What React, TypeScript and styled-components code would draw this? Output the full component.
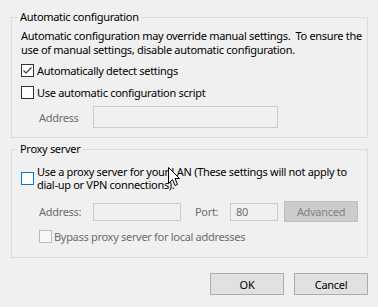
import React from "react";
import styled, { createGlobalStyle } from "styled-components";

const Global = createGlobalStyle`
  html, body { margin: 0; padding: 0; background: #f0f0f0; }
  body {
    font-family: "Noto Sans", "Open Sans", sans-serif;
    font-size: 11px;
    letter-spacing: -0.3px;
    color: #000;
  }
  * { box-sizing: border-box; }
`;

const Dialog = styled.div`
  position: relative;
  width: 378px;
  height: 307px;
  padding: 0 10px 0 11px;
  display: flex;
  flex-direction: column;
  background: #f0f0f0;
  overflow: hidden;
`;

const Group = styled.fieldset<{ $top: number; $bottom: number }>`
  margin: ${(p) => p.$top}px 0 0 0;
  padding: 0 9px ${(p) => p.$bottom}px 9px;
  border: 1px solid #dcdcdc;
  min-width: 0;
  display: flex;
  flex-direction: column;
`;

const Legend = styled.legend`
  margin-left: -3px;
  padding: 0 2px;
  line-height: 16px;
  height: 16px;
`;

const Description = styled.div`
  margin-top: 4px;
  line-height: 14px;
  white-space: pre;
`;

const Row = styled.div<{ $mt: number; $indent?: number; $h?: number }>`
  display: flex;
  align-items: center;
  margin-top: ${(p) => p.$mt}px;
  margin-left: ${(p) => p.$indent ?? 0}px;
  min-height: ${(p) => p.$h ?? 16}px;
`;

const Box = styled.span<{ $variant: "normal" | "hover" | "disabled" }>`
  flex: none;
  width: 13px;
  height: 13px;
  border: 1px solid
    ${(p) => (p.$variant === "hover" ? "#0078d7" : p.$variant === "disabled" ? "#bcbcbc" : "#333333")};
  background: ${(p) => (p.$variant === "disabled" ? "#f7f7f7" : "#ffffff")};
  display: flex;
  align-items: center;
  justify-content: center;
`;

const Label = styled.span<{ $disabled?: boolean; $gap?: number }>`
  margin-left: ${(p) => p.$gap ?? 3}px;
  color: ${(p) => (p.$disabled ? "#6d6d6d" : "#000")};
  line-height: 13px;
  white-space: pre;
`;

const FieldLabel = styled.span<{ $w: number; $ml?: number }>`
  width: ${(p) => p.$w}px;
  margin-left: ${(p) => p.$ml ?? 0}px;
  flex: none;
  color: #6d6d6d;
`;

const Input = styled.div<{ $w: number; $h: number }>`
  width: ${(p) => p.$w}px;
  height: ${(p) => p.$h}px;
  flex: none;
  border: 1px solid #cccccc;
  background: #f0f0f0;
  color: #6d6d6d;
  padding-left: 5px;
  display: flex;
  align-items: center;
`;

const DisabledButton = styled.div`
  width: 74px;
  height: 21px;
  margin-left: 6px;
  flex: none;
  background: #cccccc;
  border: 1px solid #bfbfbf;
  color: #838383;
  display: flex;
  align-items: center;
  justify-content: center;
`;

const Footer = styled.div`
  display: flex;
  justify-content: flex-end;
  gap: 10px;
  margin-top: 15px;
`;

const Button = styled.div`
  width: 74px;
  height: 22px;
  background: #e1e1e1;
  border: 1px solid #adadad;
  display: flex;
  align-items: center;
  justify-content: center;
`;

const Cursor = styled.svg`
  position: absolute;
  left: 168px;
  top: 167px;
  pointer-events: none;
`;

const Check = () => (
  <svg width="11" height="11" viewBox="0 0 11 11">
    <polyline points="1.5,5.5 4,8 9.5,2.5" fill="none" stroke="#333" strokeWidth="1.1" />
  </svg>
);

export default function App() {
  return (
    <Dialog>
      <Global />
      <Group $top={9} $bottom={9}>
        <Legend>Automatic configuration</Legend>
        <Description>
          {"Automatic configuration may override manual settings.  To ensure the"}
          <br />
          {"use of manual settings, disable automatic configuration."}
        </Description>
        <Row $mt={5}>
          <Box $variant="normal">
            <Check />
          </Box>
          <Label>Automatically detect settings</Label>
        </Row>
        <Row $mt={6}>
          <Box $variant="normal" />
          <Label>Use automatic configuration script</Label>
        </Row>
        <Row $mt={6} $indent={18} $h={22}>
          <FieldLabel $w={54}>Address</FieldLabel>
          <Input $w={185} $h={22} />
        </Row>
      </Group>
      <Group $top={3} $bottom={13}>
        <Legend>Proxy server</Legend>
        <Row $mt={8} $h={26}>
          <Box $variant="hover" />
          <Label>
            {"Use a proxy server for your LAN (These settings will not apply to"}
            <br />
            {"dial-up or VPN connections)."}
          </Label>
        </Row>
        <Row $mt={10} $indent={18} $h={21}>
          <FieldLabel $w={54}>Address:</FieldLabel>
          <Input $w={88} $h={18} />
          <FieldLabel $w={35} $ml={14}>Port:</FieldLabel>
          <Input $w={48} $h={18}>80</Input>
          <DisabledButton>Advanced</DisabledButton>
        </Row>
        <Row $mt={6} $indent={18}>
          <Box $variant="disabled" />
          <Label $disabled $gap={2}>Bypass proxy server for local addresses</Label>
        </Row>
      </Group>
      <Footer>
        <Button>OK</Button>
        <Button>Cancel</Button>
      </Footer>
      <Cursor width="13" height="21" viewBox="0 0 13 21">
        <path
          d="M0.5 0.5 L0.5 16.5 L4.5 12.5 L7 18.5 L9.5 17.5 L7 11.5 L11.5 11.5 Z"
          fill="#fff"
          stroke="#000"
          strokeWidth="1"
          strokeLinejoin="miter"
        />
      </Cursor>
    </Dialog>
  );
}
